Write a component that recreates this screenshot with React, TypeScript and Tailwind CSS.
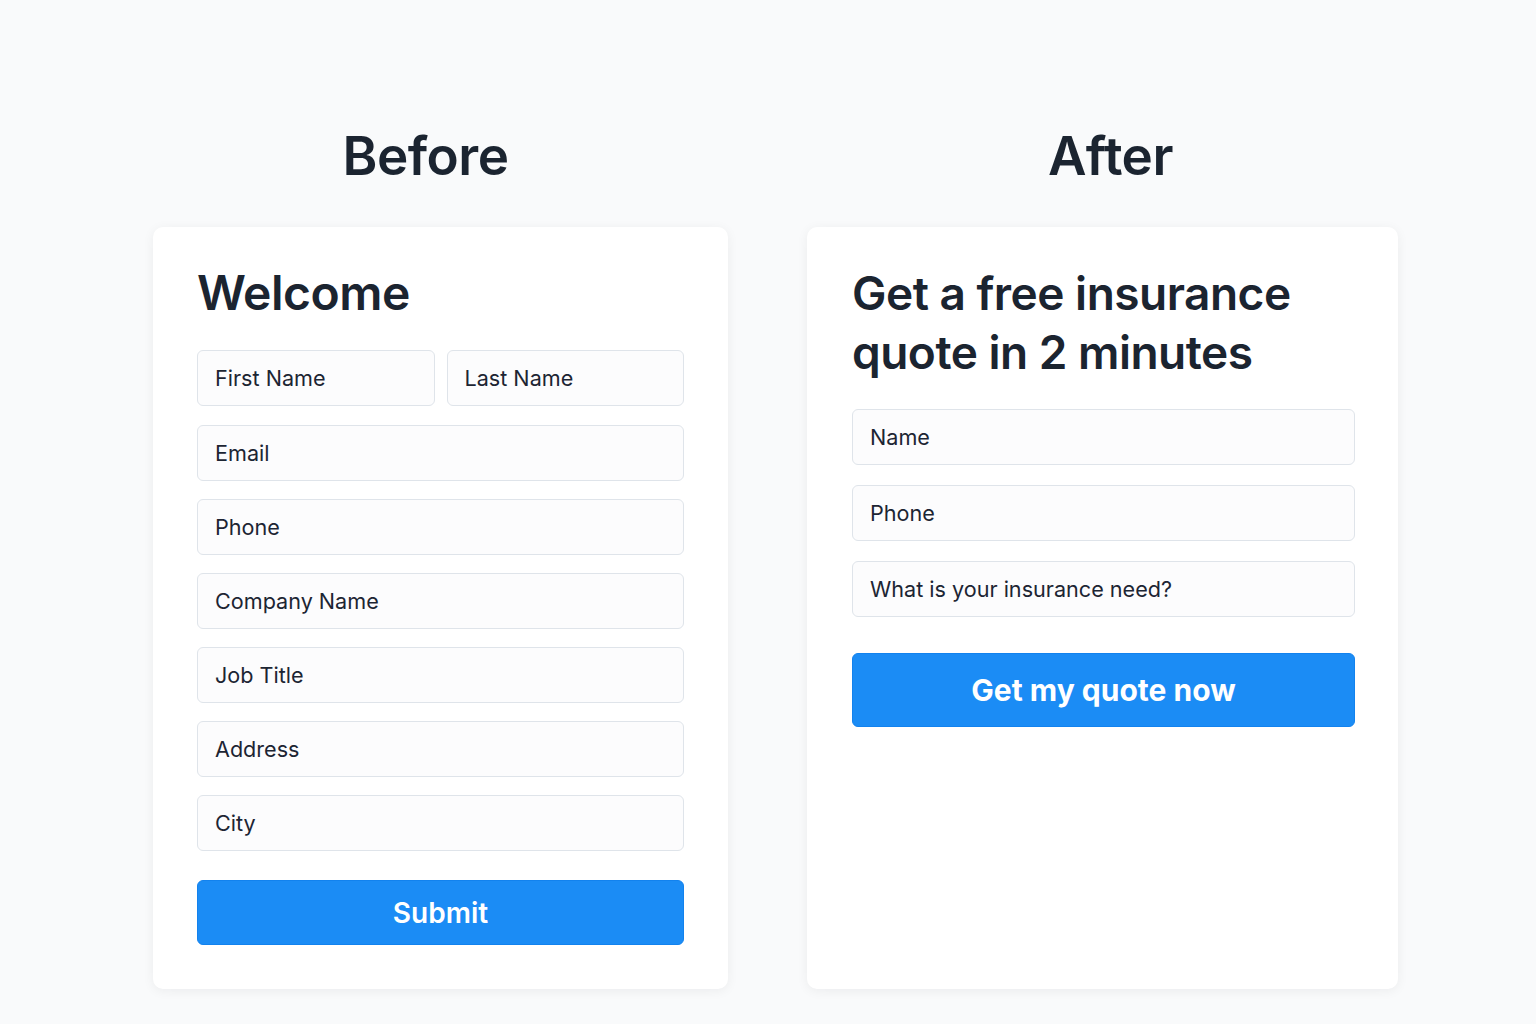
import * as React from "react";

const inputCls =
  "h-[56px] w-full rounded-[6px] border border-[#dfe4ea] bg-[#fcfcfd] px-[17px] text-[21.6px] text-[#1c2533] outline-none placeholder:text-[#1c2533]";

function Field({ label, className = "" }: { label: string; className?: string }) {
  return <input className={inputCls + " " + className} placeholder={label} readOnly />;
}

export default function App() {
  return (
    <div className="min-h-[1024px] w-full bg-[#f9fafb] font-['Inter',sans-serif] text-[#1b2430]">
      <div className="flex gap-[79px] pl-[153px] pt-[118px]">
        {/* before */}
        <div className="flex w-[575px] flex-col">
          <h2 className="pr-[30px] text-center text-[53px] leading-[76px] font-semibold tracking-[-0.5px]">Before</h2>
          <div className="mt-[33px] flex h-[762px] flex-col rounded-[10px] bg-white px-[44px] pt-[36px] shadow-[0_2px_12px_rgba(15,23,42,0.06)]">
            <h1 className="text-[48px] leading-[60px] font-semibold tracking-[-0.5px]">Welcome</h1>
            <div className="mt-[27px] flex gap-[12px]">
              <Field label="First Name" />
              <Field label="Last Name" />
            </div>
            <div className="mt-[19px] flex flex-col gap-[18px]">
              <Field label="Email" />
              <Field label="Phone" />
              <Field label="Company Name" />
              <Field label="Job Title" />
              <Field label="Address" />
              <Field label="City" />
            </div>
            <button className="mt-[29px] h-[65px] w-full rounded-[6px] border border-[#1282ee] bg-[#1b8cf5] text-[28px] font-semibold text-white">
              Submit
            </button>
          </div>
        </div>
        {/* after */}
        <div className="flex w-[591px] flex-col">
          <h2 className="pl-[16px] text-center text-[53px] leading-[76px] font-semibold tracking-[-0.5px]">After</h2>
          <div className="mt-[33px] flex h-[762px] flex-col rounded-[10px] bg-white pl-[45px] pr-[43px] pt-[37px] shadow-[0_2px_12px_rgba(15,23,42,0.06)]">
            <h1 className="text-[46px] leading-[59px] font-semibold tracking-[-0.5px]">
              Get a free insurance
              <br />
              quote in 2 minutes
            </h1>
            <div className="mt-[27px] flex flex-col gap-[20px]">
              <Field label="Name" />
              <Field label="Phone" />
              <Field label="What is your insurance need?" />
            </div>
            <button className="mt-[36px] h-[74px] w-full rounded-[6px] border border-[#1282ee] bg-[#1b8cf5] text-[30px] font-bold text-white">
              Get my quote now
            </button>
          </div>
        </div>
      </div>
    </div>
  );
}
